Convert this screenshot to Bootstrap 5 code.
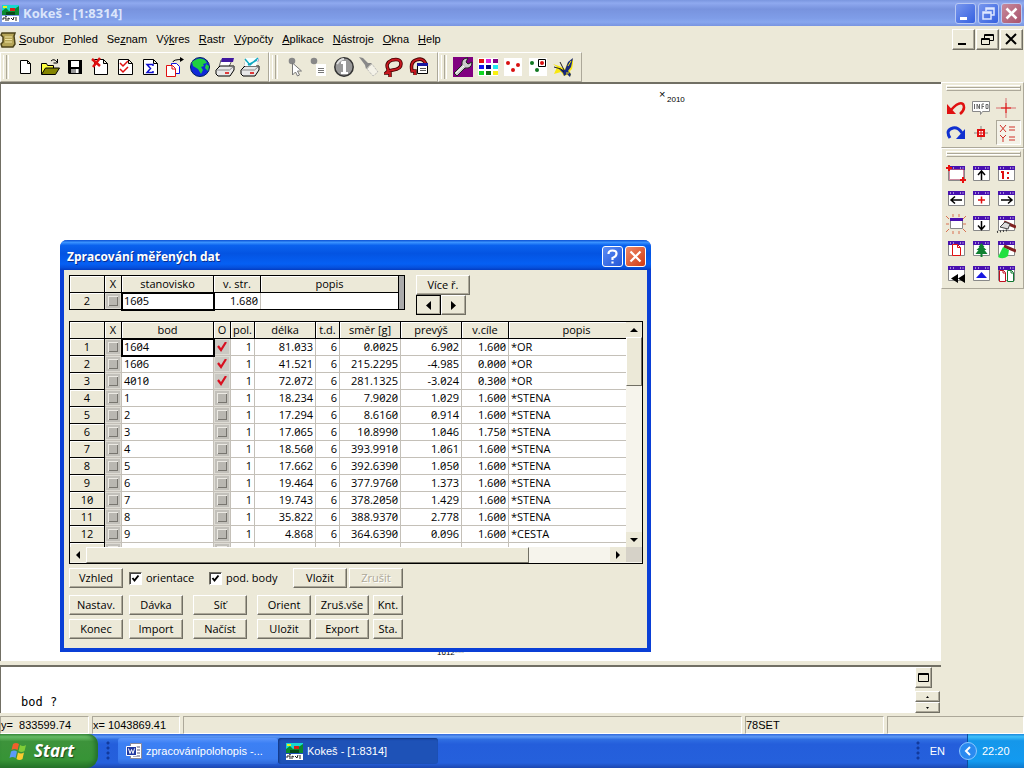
<!DOCTYPE html>
<html lang="cs">
<head>
<meta charset="utf-8">
<meta name="viewport" content="width=device-width, initial-scale=1">
<title>Kokeš - [1:8314]</title>
<link rel="stylesheet" href="https://cdn.jsdelivr.net/npm/bootstrap@5.3.0/dist/css/bootstrap.min.css">
<style>
:root{--face:#ece9d8;--lo:#aca899;--dk:#716f64;--ui:"Liberation Sans",Arial,sans-serif;--grid:"Open Sans","Noto Sans",sans-serif}
body{font:11px/14px var(--ui);color:#000;background:var(--face);height:100vh;min-height:600px;overflow:hidden}
svg{display:block;flex:none}
.btn{--bs-btn-padding-x:0;--bs-btn-padding-y:0;--bs-btn-font-size:11px;--bs-btn-line-height:14px;--bs-btn-border-radius:0;--bs-btn-border-width:0;--bs-btn-color:#000;font-family:inherit}
.gap1{gap:1px}.gap2{gap:2px}.gap6{gap:6px}.gap9{gap:9px}.gap10{gap:10px}
.shrinkable{min-width:0;min-height:0}
/* main window caption */
.caption{height:26px;background:linear-gradient(#7a96df,#8fa9ef 12%,#7893de 35%,#7f9de8 70%,#87a6ee 85%,#7894e0);color:#dbe5fb;font:700 13px/26px "Open Sans",sans-serif;padding:0 2px}
.capbtn{width:21px;height:21px;border:1px solid #b9c9f4;border-radius:3px;background:linear-gradient(135deg,#7897ee,#3560e0)}
.capbtn.closer{background:linear-gradient(135deg,#c78a9c,#a9536c)}
.menubar{height:26px;padding-right:1px}
.menulist{padding-left:2px}
.menubar a{color:#000;text-decoration:none}
.menubar u{text-underline-offset:1px}
.raised{background:var(--face);border:1px solid;border-color:#fff var(--dk) var(--dk) #fff;box-shadow:inset -1px -1px 0 var(--lo);color:#000}
.mdibtn{width:23px;height:21px}
/* tool bars */
.toolstrip{height:30px}
.toolgrp{border:1px solid;border-color:#fff var(--lo) var(--lo) #fff;padding:0 3px 0 2px}
.grip{width:8px;height:24px;border:solid #fff;border-width:0 0 0 1px;background:linear-gradient(90deg,var(--face) 2px,var(--lo) 2px 3px,var(--face) 3px 4px,#fff 4px 5px,var(--face) 5px 7px,var(--lo) 7px)}
.tool{width:25px;height:25px}
.tool svg{width:20px;height:20px}
.side{width:83px}
.sidegrp{border:1px solid;border-color:#fff var(--lo) var(--lo) #fff;padding:2px 2px 2px 4px}
.sidegrip{height:6px;border:1px solid;border-color:#fff var(--lo) var(--lo) #fff;box-shadow:inset 0 1px 0 var(--face),inset 0 2px 0 var(--lo),inset 0 3px 0 #fff;margin-bottom:4px}
.sidegrid{display:grid;grid-template-columns:repeat(3,25px)}
.tool.on{border:1px solid;border-color:var(--lo) #fff #fff var(--lo);background:#f4f2e8}
/* drawing area */
.drawing{background:#fff;border:solid var(--dk);border-width:2px 0 0 1px}
.pt{position:absolute;font:8px/8px var(--ui)}
.pt-mark{left:658px;top:6px;font-size:11px}
.pt-2010{left:666px;top:12px}
.pt-1612{left:436px;top:565px}
.cmd{height:48px;border:solid var(--dk);border-width:2px 0 0 1px;background:#fff;margin-top:4px}
.cmd output{font:12px/14px "DejaVu Sans Mono",monospace}
.cmdside{width:26px;background:var(--face)}
.zoombtn{width:17px;height:21px}
.spin{width:25px;height:11px}
.stat{border:1px solid;border-color:var(--lo) #fff #fff var(--lo);height:18px;white-space:pre;line-height:16px}
.statusbar{height:21px;padding:3px 0 0;gap:3px}
.w-y{width:89px}.w-x{width:88px}.w-set{width:139px}.w-end{width:137px}
/* dialog */
.dlg{position:absolute;left:59px;top:156px;width:591px;border:4px solid #0a3fd6;border-top:0;border-radius:7px 7px 0 0;background:var(--face);font-family:var(--grid)}
.dlgcap{height:30px;margin:0 -4px;padding:4px 5px 0 7px;border-radius:7px 7px 0 0;background:linear-gradient(#0a4fd2,#3a93ff 8%,#0a62ee 18%,#0454e2 45%,#0560f4 80%,#0650dc 92%,#033cc0);color:#fff;font:700 12px/26px "Open Sans",sans-serif;text-shadow:1px 1px 0 #0a2f90}
.dlgbtns{gap:2px;padding-top:2px}
.dlgbtn{width:21px;height:21px;border:1px solid #fff;border-radius:3px;background:linear-gradient(135deg,#5a8cf5,#2456d8)}
.dlgbtn.closer{background:linear-gradient(135deg,#ef8a68,#d03a14)}
.dlgbody{padding:5px 4px 9px 5px}
.sheet{table-layout:fixed;border-collapse:collapse;font:11px/14px var(--grid);font-feature-settings:"zero" 1,"tnum" 1;background:#fff;color:#000}
.sheet-top{width:330px}
.sheet-main{width:558px}
.c-no{width:35px}.c-x{width:17px}.c-pt{width:92px}.c-h{width:47px}.c-s{width:24px}.c-m{width:61px}
.sheet th{font-weight:400;text-align:center;background:var(--face);border:1px solid #000;padding:0;height:17px;box-shadow:inset 1px 1px 0 #fff;white-space:nowrap}
.sheet th.wide{padding-left:18px}
.sheet td{height:17px;padding:0 2px;border:solid #c4c0b8;border-width:0 1px 1px 0;white-space:nowrap;line-height:14px}
.sheet-top td{border-bottom-color:#000}
.sheet-top td:last-child{border-right-color:#000}
.sheet .n{text-align:right}
.sheet .b{padding:0;background:#dedcd5}
.sheet .cur{outline:2px solid #000;outline-offset:-1px}
.tick{appearance:none;display:block;width:14px;height:14px;margin:1px auto;border:2px solid #c2c0ba;background:#b9b7b1;box-shadow:inset 1px 1px 0 #eceae4,inset -1px -1px 0 #77756f}
.tick:checked{box-shadow:none;border-color:#cbc9c3;background:#cbc9c3 url("data:image/svg+xml,%3Csvg xmlns='http://www.w3.org/2000/svg' viewBox='0 0 12 12'%3E%3Cpath d='M2 5l3 4 5-8' fill='none' stroke='%23d81020' stroke-width='2.2'/%3E%3C/svg%3E") center/12px no-repeat border-box}
.refpad{width:6px;height:35px;background:#aaa;border:1px solid #000;border-left:0}
.nextrow{margin-left:11px}
.morebtn{width:51px}
.dbtn.arrow{width:25px}
.arrow.dark{outline:1px solid #000;outline-offset:-1px}
.frame{border:0 solid #000;border-width:0 1px 1px 0;background:#fff;margin-top:6px}
.rows{height:226px;overflow:hidden}
.track{background:#f6f4ec}
.sbv{width:16px;border-top:1px solid #000}
.thumb{background:var(--face);border:1px solid;border-color:#fff var(--dk) var(--dk) #fff}
.thumb-v{height:49px}.thumb-h{width:443px}
.sbbtn{width:16px;height:15px;background:var(--face)}
.corner{background:#d6d2c8}
.hbar{height:16px;border-left:1px solid #000}
.dbtn{width:54px;height:20px;font-size:11px;line-height:14px;white-space:nowrap;--bs-btn-border-width:1px}
.dbtn:disabled{opacity:1;color:#aca899;text-shadow:1px 1px 0 #fff;background:var(--face);border-color:#fff var(--dk) var(--dk) #fff}
.dbtn.narrow{width:30px}
.btnrow{margin-top:4px}
.btnrow.apart{margin-top:7px}
.w-or{width:74px}.w-pod{width:78px}
.chk{appearance:none;width:13px;height:13px;margin:0;background:#fff;border:1px solid;border-color:var(--dk) #fff #fff var(--dk);box-shadow:inset 1px 1px 0 #404040}
.chk:checked{background:#fff url("data:image/svg+xml,%3Csvg xmlns='http://www.w3.org/2000/svg' viewBox='0 0 11 11'%3E%3Cpath d='M2.500 5l2 2.500 4-5' fill='none' stroke='%23000' stroke-width='2'/%3E%3C/svg%3E") center/11px no-repeat}
/* task bar */
.taskbar{height:34px;background:linear-gradient(#2f68dc,#5c98f4 8%,#2f6ee2 16%,#245edb 30%,#2560dc 85%,#1c46b0);color:#fff}
.start{width:98px;background:linear-gradient(#4aa04a,#6cc06a 8%,#3d933b 22%,#379436 75%,#26742a);border-radius:0 10px 12px 0;color:#fff;font:italic 700 17px/28px "Open Sans",sans-serif;text-shadow:1px 1px 1px #1b4a1b;box-shadow:inset -3px 0 4px #24702a}
.start:hover{color:#fff}
.dots{width:6px;height:20px;background:radial-gradient(circle at 2px 2px,#123a9c 1px,transparent 2px) 0 0/6px 5px}
.dots-start{margin:0 6px 0 8px}
.task{width:160px;height:26px;border-radius:3px;color:#fff;background:linear-gradient(#5c96fb,#3c80f4 20%,#3b7df0 80%,#2f68d8);text-align:left}
.task.open{background:#1e52b7;box-shadow:inset 1px 1px 2px #123680}
.task:hover{color:#fff}
.lang{margin-right:22px}
.tray{width:57px;background:linear-gradient(#1a88dc,#3fc0fa 8%,#1597ea 20%,#129af0 80%,#0f78cc);border-left:1px solid #0a4fa0;padding-left:14px}
</style>
</head>
<body class="d-flex flex-column">

<svg width="0" height="0" class="position-absolute" aria-hidden="true">
<defs>
<symbol id="app" viewBox="0 0 17 17"><path fill="#18d8d0" d="M0 0h17v8H0z"/><path fill="#0a8a30" d="M0 8V6l4-3 3 3 4-1 6-4v9H0z"/><path fill="#e8f020" d="M1 1h4v2H1z"/><path fill="#d82018" d="M8 3h5v3H8z"/><path fill="#064a18" d="M4 7h9v3H4z"/><path fill="#fff" d="M0 11h17v6H0z"/><path stroke="#222" fill="none" d="M1 15v-2h3v3M6 16v-3l2 1M9 13l2 2 1-3M14 12v4M3 11l2 1"/></symbol>
<symbol id="scroll" viewBox="0 0 17 17"><path d="M2 2h13l-1 3 1 8-2 3H2l-1-3 2-2V6L1 4z" fill="#b5a558" stroke="#4c431a" stroke-width="1.500"/><path d="M5 6h7M5 8.500h7M5 11h7" stroke="#eee2a0"/></symbol>
<symbol id="win" viewBox="0 0 20 20"><path d="M2.500 3.500h16v13h-16z" fill="#fff" stroke="#888"/><path d="M2 2h17v4H2z" fill="#4810b0"/><path d="M4 4h1M7 4h1M14 4h1M16.500 4h1" stroke="#fff" stroke-width="1"/></symbol>
<symbol id="printer" viewBox="0 0 20 20"><path d="M6 3h11l-3 7H4z" fill="#fff" stroke="#666"/><path d="M7 1h12l-1 4H6z" fill="#4018a0"/><path d="M1 13l4-4h14v4l-4 6H3l-2-2z" fill="#e8e8e8" stroke="#000"/><path d="M1.500 13h13l4-3.500" stroke="#888" fill="none"/><path d="M10 16h4" stroke="#d00" stroke-width="1.500"/></symbol>
</defs>
</svg>

<header>
  <div class="caption d-flex align-items-center">
    <svg width="17" height="17"><use href="#app"/></svg>
    <span class="ms-1 flex-grow-1">Kokeš - [1:8314]</span>
    <div class="d-flex gap2">
      <button class="btn capbtn" aria-label="Minimalizovat"><svg width="19" height="19"><path d="M4 13h7v3H4z" fill="#fff"/></svg></button>
      <button class="btn capbtn" aria-label="Obnovit"><svg width="19" height="19" fill="none" stroke="#dfe8ff" stroke-width="1.500"><path d="M7 7V4h8v7h-3M7 5h8M4 8h8v7H4zM4 9h8"/></svg></button>
      <button class="btn capbtn closer" aria-label="Zavřít"><svg width="19" height="19" stroke="#fff" stroke-width="2.500"><path d="M4.500 4.500l10 10M14.500 4.500l-10 10"/></svg></button>
    </div>
  </div>
  <nav class="menubar d-flex align-items-center">
    <svg width="17" height="17"><use href="#scroll"/></svg>
    <div class="menulist d-flex flex-grow-1 gap9">
      <a href="#"><u>S</u>oubor</a><a href="#"><u>P</u>ohled</a><a href="#">Se<u>z</u>nam</a><a href="#">Vý<u>k</u>res</a><a href="#"><u>R</u>astr</a><a href="#"><u>V</u>ýpočty</a><a href="#"><u>A</u>plikace</a><a href="#"><u>N</u>ástroje</a><a href="#"><u>O</u>kna</a><a href="#"><u>H</u>elp</a>
    </div>
    <div class="d-flex gap1">
      <button class="btn raised mdibtn" aria-label="Minimalizovat okno"><svg width="21" height="19"><path d="M5 13h8v2H5z"/></svg></button>
      <button class="btn raised mdibtn" aria-label="Obnovit okno"><svg width="21" height="19" fill="none" stroke="#000"><path d="M7.500 8V4.500h9v6H13M7 5.500h10M4.500 8.500h8v6h-8zM4 9.500h9"/></svg></button>
      <button class="btn raised mdibtn" aria-label="Zavřít okno"><svg width="21" height="19" stroke="#000" stroke-width="2"><path d="M5 4l10 10M15 4L5 14"/></svg></button>
    </div>
  </nav>
  <div class="toolstrip d-flex" role="toolbar" aria-label="Nástroje">
    <div class="toolgrp d-flex align-items-center"><span class="grip me-1"></span>
      <button class="btn tool" aria-label="Nový"><svg viewBox="0 0 20 20"><path d="M5.500 3.500h7l3 3v10h-10zM12.500 3.500v3h3" fill="#fff" stroke="#000"/></svg></button>
      <button class="btn tool" aria-label="Otevřít"><svg viewBox="0 0 20 20"><path d="M1.500 17V6.500h5l1 2h6v3" fill="#ffff40" stroke="#000"/><path d="M1.500 17.500l4-6.500h14l-4 6.500z" fill="#848400" stroke="#000"/><path d="M11 4q3-3 6 1M17.500 2v4h-4" fill="none" stroke="#000"/></svg></button>
      <button class="btn tool" aria-label="Uložit soubor"><svg viewBox="0 0 20 20"><path d="M3 3h14v14H4l-1-1z"/><path d="M6 4h8v6H6z" fill="#fff"/><path d="M6 12h8v4H6z" fill="#999"/><path d="M11 12h2v4h-2z" fill="#fff"/></svg></button>
      <button class="btn tool" aria-label="Smazat"><svg viewBox="0 0 20 20"><path d="M4.500 2.500h9l4 4v11h-13zM13.500 2.500v4h4" fill="#fff" stroke="#000"/><path d="M2 2l8 7M10 1L3 10" stroke="#e01010" stroke-width="2.500"/></svg></button>
      <button class="btn tool" aria-label="Kontrola"><svg viewBox="0 0 20 20"><path d="M3.500 2.500h10l4 4v11h-14zM13.500 2.500v4h4" fill="#fff" stroke="#000"/><path d="M5 6l3 3 5-5M5 12l3 3 5-5" fill="none" stroke="#e01010" stroke-width="1.500"/></svg></button>
      <button class="btn tool" aria-label="Součet"><svg viewBox="0 0 20 20"><path d="M3.500 2.500h10l4 4v11h-14zM13.500 2.500v4h4" fill="#fff" stroke="#000"/><path d="M13 9V7.500H7l3.500 4L7 15.500h6V14" fill="none" stroke="#1010d0" stroke-width="1.500"/></svg></button>
      <button class="btn tool" aria-label="Kopírovat"><svg viewBox="0 0 20 20"><path d="M6.500 6.500h5l3 3v7h-8z" fill="#fff" stroke="#1010e0"/><path d="M1.500 8.500h6l3 3v8h-9zM7 9v3h3" fill="#fff" stroke="#e01010"/><path d="M8 5q0-2.500 9-2.500" fill="none" stroke="#000"/><path d="M15 0l4 2.500L15 5z"/></svg></button>
      <button class="btn tool" aria-label="Mapa"><svg viewBox="0 0 20 20"><circle cx="10" cy="10" r="9.500" fill="#1028d8" stroke="#002060"/><path d="M2 5q7-6 13-2l2 3-4 1 1 2-3 1 2 3-2 4-3-5-5-3z" fill="#20d040"/><path d="M16 7l3 2-1 5-3-3z" fill="#20d040"/></svg></button>
      <button class="btn tool" aria-label="Tisk"><svg viewBox="0 0 20 20"><use href="#printer"/></svg></button>
      <button class="btn tool" aria-label="Tisk výkresu"><svg viewBox="0 0 20 20"><use href="#printer"/><path d="M6 1h13l-3 8H4z" fill="#f8ffff"/><path d="M5 2l5 6L18 1M8 8l9-5" stroke="#10a8c0" stroke-width="1.500" fill="none"/></svg></button>
    </div>
    <div class="toolgrp d-flex align-items-center"><span class="grip me-1"></span>
      <button class="btn tool" aria-label="Výběr"><svg viewBox="0 0 20 20"><circle cx="8" cy="4" r="3.300" fill="#888"/><path d="M8.500 6v12l3-3 2 4 2-1-2-4h4z" fill="#fff" stroke="#777"/></svg></button>
      <button class="btn tool" aria-label="Seznam bodů"><svg viewBox="0 0 20 20"><circle cx="5" cy="4" r="3.300" fill="#888"/><path d="M7 7h10v12H7z" fill="#fff"/><path d="M9 11.500h6M9 13.500h6M9 15.500h6" stroke="#777"/></svg></button>
      <button class="btn tool" aria-label="Informace"><svg viewBox="0 0 20 20"><circle cx="10" cy="10" r="9.200" fill="#999" stroke="#333" stroke-width="1.500"/><path d="M3 7q3-5 7-5" stroke="#ddd" fill="none" stroke-width="2"/><path d="M8 4h4v11h2v2H7v-2h2V7H7V5z" fill="#fff"/></svg></button>
      <button class="btn tool" aria-label="Svítilna"><svg viewBox="0 0 20 20"><path d="M0 0l4 1 5 5h4l-6 6-1-4z" fill="#888"/><path d="M8 12l5-5 6 8-5 4z" fill="#f4f2e8" stroke="#aaa" stroke-dasharray="1 1"/></svg></button>
      <button class="btn tool" aria-label="Laso"><svg viewBox="0 0 20 20" fill="none"><path d="M4 16v-4q-3-6 4-9 9-2 9 4 0 5-8 6l-5 1-2 2h4v4" stroke="#400" stroke-width="3.500"/><path d="M4 16v-4q-3-6 4-9 9-2 9 4 0 5-8 6l-5 1-2 2h4v4" stroke="#c81820" stroke-width="1.800"/></svg></button>
      <button class="btn tool" aria-label="Laso okno"><svg viewBox="0 0 20 20"><path d="M6 18v-4H3Q1 5 7 3q7-3 10 4" stroke="#400" stroke-width="3.500" fill="none"/><path d="M6 18v-4H3Q1 5 7 3q7-3 10 4" stroke="#c81820" stroke-width="1.800" fill="none"/><path d="M8.500 6.500h10v10h-10z" fill="#fff" stroke="#000"/><path d="M8 6h11v3H8z" fill="#1818a0"/><path d="M11 11.500h6M11 13.500h6" stroke="#555"/></svg></button>
    </div>
    <div class="toolgrp d-flex align-items-center"><span class="grip me-1"></span>
      <button class="btn tool" aria-label="Nastavení"><svg viewBox="0 0 20 20"><path d="M0 0h20v20H0z" fill="#800080"/><path d="M1 16l8-8q-1-7 6-7l-2 4 2 2 4-2q0 7-7 6l-8 8z" fill="#ccc" stroke="#222"/><path d="M3 16l8-7" stroke="#fff"/></svg></button>
      <button class="btn tool" aria-label="Barvy"><svg viewBox="0 0 20 20" shape-rendering="crispEdges"><path fill="#fff" d="M0 1h20v18H0z"/><path fill="#e01010" d="M1 2h5v4H1z"/><path fill="#d820d8" d="M8 2h5v4H8z"/><path fill="#800080" d="M15 2h5v4h-5z"/><path fill="#1010f0" d="M1 8h5v4H1z"/><path fill="#000080" d="M8 8h5v4H8z"/><path fill="#20e8f0" d="M15 8h5v4h-5z"/><path fill="#10d820" d="M1 14h5v4H1z"/><path fill="#107010" d="M8 14h5v4H8z"/><path fill="#f8f010" d="M15 14h5v4h-5z"/></svg></button>
      <button class="btn tool" aria-label="Body"><svg viewBox="0 0 20 20"><path fill="#fff" d="M1 1h18v18H1z"/><g fill="#d81010"><circle cx="5" cy="6" r="2"/><circle cx="10" cy="13" r="2"/><circle cx="15" cy="8" r="2"/></g></svg></button>
      <button class="btn tool" aria-label="Vybrané body"><svg viewBox="0 0 20 20"><path fill="#fff" d="M1 1h18v18H1z"/><circle cx="4" cy="6" r="2" fill="#107820"/><circle cx="9" cy="13" r="2" fill="#107820"/><path d="M10.500 2.500h7v7h-7z" fill="#fff" stroke="#000"/><circle cx="14" cy="6" r="2" fill="#d81010"/></svg></button>
      <button class="btn tool" aria-label="Motýl"><svg viewBox="0 0 20 20"><path d="M0 7l4 3-3 7 7-2 3 4 3-1 4 1-1-5 2-2 2-11-7 6-2 5-6-3z" fill="#f8e810"/><path d="M6 12l6 1 3-8 5-4-2 9-3 4 3 3-1 3-3-3-3 2-1-3z" fill="#182880"/><path d="M15 9l3-5M13 16h3" stroke="#f8e810"/><path d="M1 10l7 2 3 3M7 5l4 8" stroke="#222" fill="none"/></svg></button>
    </div>
  </div>
</header>

<div class="d-flex flex-grow-1 shrinkable">
  <main class="d-flex flex-column flex-grow-1 shrinkable">
    <section class="drawing position-relative flex-grow-1">
      <span class="pt pt-mark">×</span><span class="pt pt-2010">2010</span>
      <span class="pt pt-1612">1612***</span>

      <div class="dlg" role="dialog" aria-labelledby="dlgtitle">
        <div class="dlgcap d-flex">
          <span id="dlgtitle" class="flex-grow-1">Zpracování měřených dat</span>
          <div class="dlgbtns d-flex">
            <button class="btn dlgbtn" aria-label="Nápověda"><svg width="19" height="19" fill="none" stroke="#fff" stroke-width="2.200"><path d="M5.500 7q0-3.500 4-3.500t4 3-4 4.500v2M9.500 14.500v2"/></svg></button>
            <button class="btn dlgbtn closer" aria-label="Zavřít dialog"><svg width="19" height="19" stroke="#fff" stroke-width="2.200"><path d="M4.500 4.500l10 10M14.500 4.500l-10 10"/></svg></button>
          </div>
        </div>
        <div class="dlgbody">
          <div class="d-flex align-items-start">
            <table class="sheet sheet-top">
              <colgroup><col class="c-no"><col class="c-x"><col class="c-pt"><col class="c-h"><col></colgroup>
              <thead><tr><th></th><th>X</th><th>stanovisko</th><th>v. str.</th><th>popis</th></tr></thead>
              <tbody><tr><th scope="row">2</th><td class="b"><input type="checkbox" class="tick" aria-label="X 1605"></td><td class="cur">1605</td><td class="n">1.680</td><td></td></tr></tbody>
            </table>
            <div class="refpad"></div>
            <div class="nextrow">
              <button class="btn raised dbtn morebtn d-block">Více ř.</button>
              <div class="d-flex">
                <button class="btn raised dbtn arrow dark" aria-label="Předchozí"><svg class="m-auto" width="9" height="9"><path d="M7 0v9L2 4.500z"/></svg></button>
                <button class="btn raised dbtn arrow" aria-label="Další"><svg class="m-auto" width="9" height="9"><path d="M2 0v9l5-4.500z"/></svg></button>
              </div>
            </div>
          </div>
          <div class="frame">
            <div class="d-flex rows">
              <div class="flex-grow-1 overflow-hidden">
                <table class="sheet sheet-main">
                  <colgroup><col class="c-no"><col class="c-x"><col class="c-pt"><col class="c-x"><col class="c-s"><col class="c-m"><col class="c-s"><col class="c-m"><col class="c-m"><col class="c-h"><col></colgroup>
                  <thead><tr><th></th><th>X</th><th>bod</th><th>O</th><th>pol.</th><th>délka</th><th>t.d.</th><th>směr [g]</th><th>prevýš</th><th>v.cíle</th><th class="wide">popis</th></tr></thead>
                  <tbody id="points"></tbody>
                </table>
              </div>
              <div class="sbv track d-flex flex-column">
                <div class="sbbtn d-flex"><svg class="m-auto" width="8" height="4"><path d="M0 4h8L4 0z"/></svg></div>
                <div class="thumb thumb-v"></div>
                <div class="flex-grow-1"></div>
                <div class="sbbtn d-flex"><svg class="m-auto" width="8" height="4"><path d="M0 0h8L4 4z"/></svg></div>
              </div>
            </div>
            <div class="d-flex hbar track">
              <div class="sbbtn d-flex"><svg class="m-auto" width="4" height="8"><path d="M4 0v8L0 4z"/></svg></div>
              <div class="thumb thumb-h"></div>
              <div class="flex-grow-1"></div>
              <div class="sbbtn d-flex"><svg class="m-auto" width="4" height="8"><path d="M0 0v8l4-4z"/></svg></div>
              <div class="sbbtn corner"></div>
            </div>
          </div>
          <div class="btnrow d-flex align-items-center gap6">
            <button class="btn raised dbtn">Vzhled</button>
            <label class="w-or d-flex align-items-center gap-1"><input type="checkbox" class="chk" checked>orientace</label>
            <label class="w-pod d-flex align-items-center gap-1"><input type="checkbox" class="chk" checked>pod. body</label>
            <div class="d-flex gap2">
              <button class="btn raised dbtn">Vložit</button>
              <button class="btn raised dbtn" disabled>Zrušit</button>
            </div>
          </div>
          <div class="btnrow apart d-flex gap10">
            <div class="d-flex gap6"><button class="btn raised dbtn">Nastav.</button><button class="btn raised dbtn">Dávka</button></div>
            <button class="btn raised dbtn">Síť</button>
            <div class="d-flex gap-1"><button class="btn raised dbtn">Orient</button><button class="btn raised dbtn">Zruš.vše</button><button class="btn raised dbtn narrow">Knt.</button></div>
          </div>
          <div class="btnrow d-flex gap10">
            <div class="d-flex gap6"><button class="btn raised dbtn">Konec</button><button class="btn raised dbtn">Import</button></div>
            <button class="btn raised dbtn">Načíst</button>
            <div class="d-flex gap-1"><button class="btn raised dbtn">Uložit</button><button class="btn raised dbtn">Export</button><button class="btn raised dbtn narrow">Sta.</button></div>
          </div>
        </div>
      </div>
    </section>
    <section class="cmd d-flex">
      <output class="flex-grow-1 align-self-end pb-1 ps-3 ms-1">bod ?</output>
      <div class="cmdside d-flex flex-column">
        <button class="btn raised zoombtn" aria-label="Maximalizovat"><svg class="m-auto" width="11" height="9" fill="none" stroke="#000"><path d="M.5.500h10v8H.5zM0 1.500h11"/></svg></button>
        <div class="mt-auto">
          <button class="btn raised spin d-flex" aria-label="Nahoru"><svg class="m-auto" width="3" height="2"><path d="M0 2h3L1.500 0z"/></svg></button>
          <button class="btn raised spin d-flex" aria-label="Dolů"><svg class="m-auto" width="3" height="2"><path d="M0 0h3L1.500 2z"/></svg></button>
        </div>
      </div>
    </section>
  </main>
  <aside class="side">
    <div class="sidegrp">
      <div class="sidegrip"></div>
      <div class="sidegrid">
        <button class="btn tool" aria-label="Zpět"><svg viewBox="0 0 20 20"><path d="M5 12q8-9 12-6 3 5-3 10" fill="none" stroke="#e01010" stroke-width="2.500"/><path d="M1 6v10h9z" fill="#e01010"/></svg></button>
        <button class="btn tool" aria-label="Info"><svg viewBox="0 0 20 20"><path d="M1.500 3.500h17v10h-7l-2 3v-3h-8z" fill="#fff" stroke="#888"/><path d="M3.500 6v5M6 11V6l2.500 5V6M11 11V6h2M11 8.500h2M15 6.500h2v4h-2z" stroke="#666" fill="none"/></svg></button>
        <button class="btn tool" aria-label="Kurzor"><svg viewBox="0 0 20 20"><path d="M0 10h20M10 0v20" stroke="#d87070"/><path d="M5 10h10M10 5v10" stroke="#e01010"/></svg></button>
        <button class="btn tool" aria-label="Znovu"><svg viewBox="0 0 20 20"><path d="M4 15q-5-8 3-10 5-1 9 5" fill="none" stroke="#1030d0" stroke-width="3"/><path d="M19 6v10h-9z" fill="#1030d0"/></svg></button>
        <button class="btn tool" aria-label="Střed"><svg viewBox="0 0 20 20"><path d="M3 10h14M10 3v14" stroke="#888"/><path d="M7 7h6v6H7z" fill="#fff" stroke="#e01010" stroke-width="2"/><path d="M7 10h6M10 7v6" stroke="#e01010"/></svg></button>
        <button class="btn tool on" aria-label="Souřadnice"><svg viewBox="0 0 20 20"><path d="M3 2l6 7M9 2L3 9M12 4h6M12 7h6M3 12l3 3 3-3M6 15v4M12 14h6M12 17h6" fill="none" stroke="#d03028"/></svg></button>
      </div>
    </div>
    <div class="sidegrp">
      <div class="sidegrip"></div>
      <div class="sidegrid">
        <button class="btn tool" aria-label="Výřez"><svg viewBox="0 0 20 20"><use href="#win"/><path d="M3.500 5.500h14v10h-14z" fill="#fff" stroke="#a01040" stroke-dasharray="1 1"/><path d="M0 4h6M3 1v6M14 16h6M17 13v6" stroke="#e81010" stroke-width="2"/></svg></button>
        <button class="btn tool" aria-label="Posun nahoru"><svg viewBox="0 0 20 20"><use href="#win"/><path d="M10.500 8v8M7 11l3.500-4 3.500 4" stroke="#000" stroke-width="1.500" fill="none"/></svg></button>
        <button class="btn tool" aria-label="Měřítko"><svg viewBox="0 0 20 20"><use href="#win"/><path d="M5 8h2v7M12 8v2M12 13v2" stroke="#e01010" stroke-width="2" fill="none"/></svg></button>
        <button class="btn tool" aria-label="Posun vlevo"><svg viewBox="0 0 20 20"><use href="#win"/><path d="M5 11h11M9 7.500L5 11l4 3.500" stroke="#000" stroke-width="1.500" fill="none"/></svg></button>
        <button class="btn tool" aria-label="Střed okna"><svg viewBox="0 0 20 20"><use href="#win"/><path d="M7 11h7M10.500 7.500v7" stroke="#e01010" stroke-width="1.500"/></svg></button>
        <button class="btn tool" aria-label="Posun vpravo"><svg viewBox="0 0 20 20"><use href="#win"/><path d="M5 11h11M12 7.500l4 3.500-4 3.500" stroke="#000" stroke-width="1.500" fill="none"/></svg></button>
        <button class="btn tool" aria-label="Celek"><svg viewBox="0 0 20 20"><path d="M0 2l3 3M20 2l-3 3M0 10h3M17 10h3M0 18l3-3M20 18l-3-3M7 0v3M13 0v3M7 17v3M13 17v3" stroke="#d87050"/><path d="M4.500 5.500h12v9h-12z" fill="#fff" stroke="#888"/><path d="M4 4h13v3H4z" fill="#4810b0"/></svg></button>
        <button class="btn tool" aria-label="Posun dolů"><svg viewBox="0 0 20 20"><use href="#win"/><path d="M10.500 7v8M7 11.500l3.500 4 3.500-4" stroke="#000" stroke-width="1.500" fill="none"/></svg></button>
        <button class="btn tool" aria-label="Překreslit"><svg viewBox="0 0 20 20"><use href="#win"/><path d="M8 8l12 5" stroke="#802020" stroke-width="3"/><path d="M4 13l5-5 5 2-2 5z" fill="#ddd" stroke="#444"/><path d="M1 18l12-2" stroke="#333" stroke-dasharray="1 2" stroke-width="2"/></svg></button>
        <button class="btn tool" aria-label="Stránka"><svg viewBox="0 0 20 20"><use href="#win"/><path d="M6.500 5.500h5l3 3v8h-8zM11.500 5.500v3h3" fill="#fff" stroke="#e01010"/></svg></button>
        <button class="btn tool" aria-label="Strom"><svg viewBox="0 0 20 20"><use href="#win"/><path d="M10.500 4l3 4h-1l3 3h-2l3 4h-5v3h-2v-3h-5l3-4h-2l3-3h-1z" fill="#108030"/></svg></button>
        <button class="btn tool" aria-label="Vybarvit"><svg viewBox="0 0 20 20"><use href="#win"/><path d="M8 7l12 5" stroke="#802020" stroke-width="3"/><path d="M7 8l6 3-1 6q-5 4-10 1z" fill="#20e040"/></svg></button>
        <button class="btn tool" aria-label="Předchozí pohled"><svg viewBox="0 0 20 20"><use href="#win"/><path d="M12 10v9l-7-4.500zM19 10v9l-7-4.500z"/></svg></button>
        <button class="btn tool" aria-label="Vrstva výš"><svg viewBox="0 0 20 20"><use href="#win"/><path d="M5 14l5.500-6 5.500 6z" fill="#1818e0"/></svg></button>
        <button class="btn tool" aria-label="Dva výkresy"><svg viewBox="0 0 20 20"><use href="#win"/><path d="M3.500 6.500h4l2 2v9h-6zM7 6v3h2" fill="#fff" stroke="#c01020"/><path d="M11.500 6.500h4l2 2v9h-6zM15 6v3h2" fill="#fff" stroke="#107830"/></svg></button>
      </div>
    </div>
  </aside>
</div>

<footer>
  <div class="statusbar d-flex">
    <div class="stat w-y">y=  833599.74</div>
    <div class="stat w-x">x= 1043869.41</div>
    <div class="stat flex-grow-1"></div>
    <div class="stat w-set">78SET</div>
    <div class="stat w-end"></div>
  </div>
  <div class="taskbar d-flex align-items-stretch">
    <button class="btn start d-flex align-items-center ps-2 gap-1"><svg width="22" height="20" viewBox="0 0 20 20"><path d="M4 3q3-2 6 0L8.500 9q-3-2-6 0z" fill="#f0602c"/><path d="M11 4q3 2 6 0l-1.500 6q-3 2-6 0z" fill="#80cc38"/><path d="M2 10.500q3-2 6 0L6.500 17q-3-2-6 0z" fill="#5a9af8"/><path d="M9 11.500q3 2 6 0L13.500 18q-3 2-6 0z" fill="#fccc30"/></svg>Start</button>
    <span class="dots dots-start align-self-center"></span>
    <div class="d-flex align-items-end pb-1 flex-grow-1">
      <button class="btn task d-flex align-items-center gap-1 ps-2"><svg width="16" height="16"><path d="M4.500.500h11v15h-11z" fill="#fff" stroke="#889"/><path d="M7 4h7M7 7h7M11 10h3M7 13h7" stroke="#557"/><path d="M.5 3.500h10v9H.5z" fill="#2038a0" stroke="#fff"/><path d="M2.500 5.500l1.500 5 1.500-4 1.500 4 1.500-5" fill="none" stroke="#fff"/></svg>zpracovánípolohopis -...</button>
      <button class="btn task open d-flex align-items-center gap-1 ps-2"><svg width="17" height="17"><use href="#app"/></svg>Kokeš - [1:8314]</button>
    </div>
    <span class="dots me-2 align-self-center"></span>
    <span class="lang align-self-center">EN</span>
    <div class="tray d-flex align-items-center position-relative">
      <svg class="position-absolute top-50 start-0 translate-middle" width="18" height="18"><circle cx="9" cy="9" r="8.500" fill="#2a8af0" stroke="#8cc8ff"/><path d="M11 5L7 9l4 4" fill="none" stroke="#fff" stroke-width="2"/></svg>
      <span>22:20</span>
    </div>
  </div>
</footer>

<script>
// bod, orientace, délka, směr, převýšení, výška cíle, popis
const points = [
  ["1604",1,"81.033","0.0025","6.902","1.600","*OR"],
  ["1606",1,"41.521","215.2295","-4.985","0.000","*OR"],
  ["4010",1,"72.072","281.1325","-3.024","0.300","*OR"],
  ["1",0,"18.234","7.9020","1.029","1.600","*STENA"],
  ["2",0,"17.294","8.6160","0.914","1.600","*STENA"],
  ["3",0,"17.065","10.8990","1.046","1.750","*STENA"],
  ["4",0,"18.560","393.9910","1.061","1.600","*STENA"],
  ["5",0,"17.662","392.6390","1.050","1.600","*STENA"],
  ["6",0,"19.464","377.9760","1.373","1.600","*STENA"],
  ["7",0,"19.743","378.2050","1.429","1.600","*STENA"],
  ["8",0,"35.822","388.9370","2.778","1.600","*STENA"],
  ["9",0,"4.868","364.6390","0.096","1.600","*CESTA"],
  ["10",0,"2.781","2.2670","0.278","1.600","*CESTA"]
];
document.getElementById("points").innerHTML = points.map((p, i) => `<tr>
  <th scope="row">${i < 12 ? i + 1 : ""}</th>
  <td class="b"><input type="checkbox" class="tick" aria-label="X ${p[0]}"></td>
  <td class="${i ? "" : "cur"}">${p[0]}</td>
  <td class="b"><input type="checkbox" class="tick" aria-label="O ${p[0]}" ${p[1] ? "checked" : ""}></td>
  <td class="n">1</td><td class="n">${p[2]}</td><td class="n">6</td>
  <td class="n">${p[3]}</td><td class="n">${p[4]}</td><td class="n">${p[5]}</td><td>${p[6]}</td></tr>`).join("");
</script>
<script src="https://cdn.jsdelivr.net/npm/bootstrap@5.3.0/dist/js/bootstrap.bundle.min.js"></script>
</body>
</html>
